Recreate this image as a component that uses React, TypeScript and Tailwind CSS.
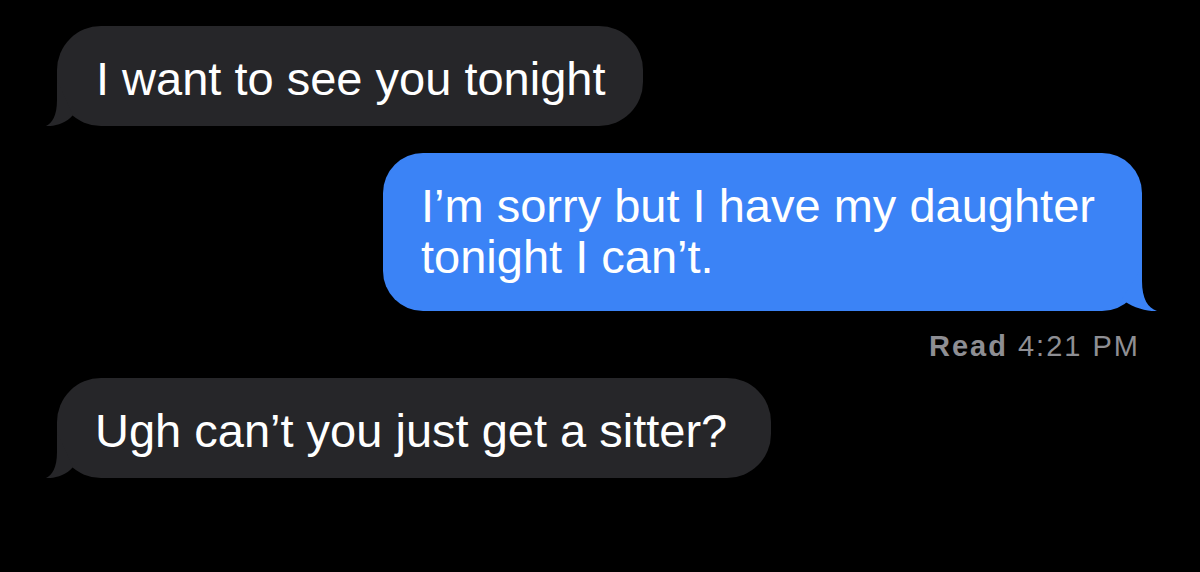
import React from "react";

// Curled tail on the lower-left corner of an incoming bubble.
function TailLeft({ color }: { color: string }) {
  return (
    <svg
      className="absolute bottom-0 left-[-12px] block"
      width={32}
      height={46}
      viewBox="-12 -46 32 46"
      aria-hidden
    >
      <path d="M0,-46 L0,-26 C0,-10 -5,-3 -11,0 C-4,0.6 9,-2 16,-11 Z" fill={color} />
    </svg>
  );
}

// Mirrored tail on the lower-right corner of an outgoing bubble.
function TailRight({ color }: { color: string }) {
  return (
    <svg
      className="absolute bottom-0 right-[-16px] block"
      width={38}
      height={44}
      viewBox="-22 -44 38 44"
      aria-hidden
    >
      <path d="M0,-44 L0,-30 C0,-12 6,-3 15,0 C6,1 -12,-4 -20,-12 Z" fill={color} />
    </svg>
  );
}

export default function App() {
  return (
    <div className="w-[1200px] h-[572px] overflow-hidden bg-black flex flex-col pl-[57px] pr-[58px] pt-[26px] font-['Liberation_Sans','Helvetica',sans-serif] text-white">
      <div className="self-start relative rounded-[44px] bg-[#262629] pl-[39px] pr-[37px] pt-[27px] pb-[22px] text-[47px] leading-[51px] whitespace-nowrap">
        I want to see you tonight
        <TailLeft color="#262629" />
      </div>

      <div className="self-end relative mt-[27px] w-[759px] rounded-[40px] bg-[#3b83f6] pl-[38px] pr-[30px] pt-[27px] pb-[29px] text-[47px] leading-[51px]">
        I’m sorry but I have my daughter tonight I can’t.
        <TailRight color="#3b83f6" />
      </div>

      <div className="self-end mt-[17px] mr-[2px] text-[29px] leading-[36px] tracking-[2px] text-[#8e8e93] whitespace-nowrap">
        <span className="font-semibold">Read</span> 4:21 PM
      </div>

      <div className="self-start relative mt-[14px] rounded-[44px] bg-[#262629] pl-[38px] pr-[44px] pt-[27px] pb-[22px] text-[47px] leading-[51px] whitespace-nowrap">
        Ugh can’t you just get a sitter?
        <TailLeft color="#262629" />
      </div>
    </div>
  );
}
